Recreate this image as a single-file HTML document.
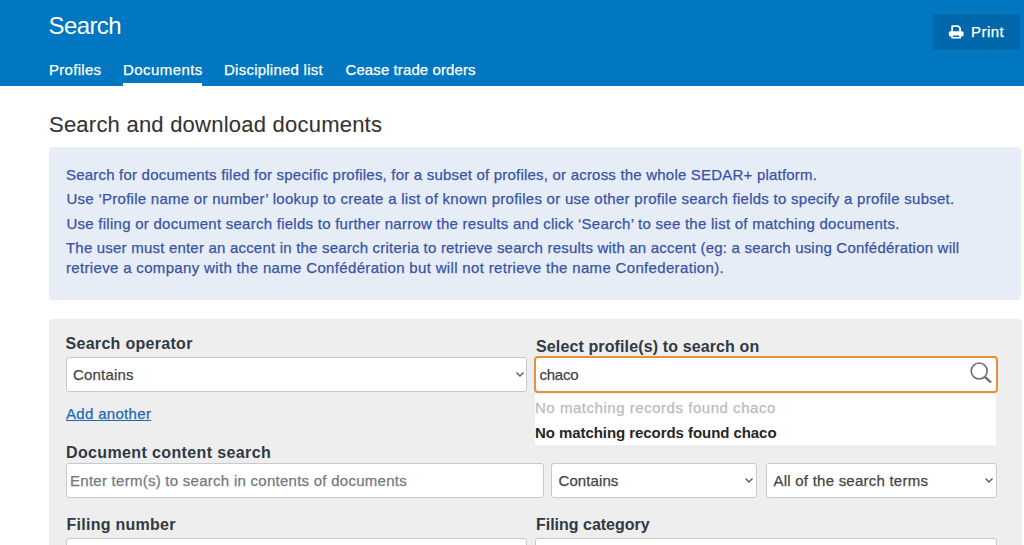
<!DOCTYPE html>
<html>
<head>
<meta charset="utf-8">
<style>
html,body{margin:0;padding:0;}
body{width:1024px;height:545px;overflow:hidden;position:relative;background:#fff;font-family:"Liberation Sans",sans-serif;}
.a{position:absolute;white-space:nowrap;line-height:1;-webkit-text-stroke:0.25px currentColor;}
#hdr{position:absolute;left:0;top:0;width:1024px;height:86px;background:#0077c0;}
#uline{position:absolute;left:123px;top:83px;width:79px;height:3px;background:#fff;}
#print{position:absolute;left:933px;top:14px;width:87px;height:36px;background:#0067ab;border-radius:2px;}
#info{position:absolute;left:49px;top:147px;width:972px;height:153px;background:#e6edf7;border-radius:4px;}
#grey{position:absolute;left:49px;top:319px;width:973px;height:240px;background:#eeeeee;border-radius:4px;}
.box{position:absolute;background:#fff;border:1px solid #c9c9c9;border-radius:3px;box-sizing:border-box;}
.chv{position:absolute;}
</style>
</head>
<body>
<div id="hdr"></div>
<div id="uline"></div>
<div id="print"></div>
<svg style="position:absolute;left:944px;top:20px" width="26" height="24" viewBox="0 0 26 24">
  <path d="M8.2,12 V6.2 H14.2 L16.1,8.1 V12" fill="none" stroke="#fff" stroke-width="1.8" stroke-linejoin="round"/>
  <rect x="4.8" y="11.2" width="14.8" height="5.3" rx="1.6" fill="#fff"/>
  <rect x="7.3" y="14.6" width="9.7" height="3.9" rx="0.6" fill="#fff"/>
  <rect x="9.1" y="15.5" width="6.1" height="1.5" fill="#0067ab"/>
</svg>
<div id="info"></div>
<div id="grey"></div>
<div class="box" style="left:66px;top:357px;width:461px;height:35px"></div>
<svg class="chv" style="left:514.5px;top:370.5px" width="10" height="7" viewBox="0 0 10 7"><polyline points="1.5,1.5 5,5 8.5,1.5" fill="none" stroke="#5a5a5a" stroke-width="1.4"/></svg>
<div class="box" style="left:66px;top:463px;width:478px;height:35px"></div>
<div class="box" style="left:551px;top:463px;width:206px;height:35px"></div>
<svg class="chv" style="left:743.5px;top:476.5px" width="10" height="7" viewBox="0 0 10 7"><polyline points="1.5,1.5 5,5 8.5,1.5" fill="none" stroke="#5a5a5a" stroke-width="1.4"/></svg>
<div class="box" style="left:766px;top:463px;width:231px;height:35px"></div>
<svg class="chv" style="left:983.5px;top:476.5px" width="10" height="7" viewBox="0 0 10 7"><polyline points="1.5,1.5 5,5 8.5,1.5" fill="none" stroke="#5a5a5a" stroke-width="1.4"/></svg>
<div class="box" style="left:66px;top:538px;width:461px;height:35px"></div>
<div style="position:absolute;left:535px;top:394px;width:461px;height:50.5px;background:#fff"></div>
<div class="box" style="left:534px;top:356px;width:464px;height:37px;border:2px solid #e3923a;border-radius:4px"></div>
<svg style="position:absolute;left:968px;top:361px" width="26" height="26" viewBox="0 0 26 26">
  <circle cx="11.2" cy="10" r="8" fill="none" stroke="#6e6e6e" stroke-width="1.6"/>
  <line x1="17" y1="15.8" x2="23" y2="21.5" stroke="#6e6e6e" stroke-width="2.4"/>
</svg>
<div class="box" style="left:535px;top:538px;width:462px;height:35px"></div>
<div class="a" style="left:48.50px;top:14.48px;font-size:24px;font-weight:400;color:#fff;letter-spacing:-0.600px;-webkit-text-stroke:0;">Search</div>
<div class="a" style="left:49.00px;top:62.20px;font-size:15px;font-weight:400;color:#fff;letter-spacing:0.286px;">Profiles</div>
<div class="a" style="left:123.00px;top:62.20px;font-size:15px;font-weight:400;color:#fff;letter-spacing:0.425px;">Documents</div>
<div class="a" style="left:224.00px;top:62.20px;font-size:15px;font-weight:400;color:#fff;letter-spacing:0.240px;">Disciplined list</div>
<div class="a" style="left:345.50px;top:62.20px;font-size:15px;font-weight:400;color:#fff;letter-spacing:0.094px;">Cease trade orders</div>
<div class="a" style="left:971.00px;top:24.30px;font-size:15px;font-weight:400;color:#fff;letter-spacing:0.450px;">Print</div>
<div class="a" style="left:49.00px;top:114.08px;font-size:22px;font-weight:400;color:#333;letter-spacing:0.229px;-webkit-text-stroke:0.1px #333;">Search and download documents</div>
<div class="a" style="left:66.00px;top:166.70px;font-size:15px;font-weight:400;color:#3853a6;letter-spacing:0.204px;">Search for documents filed for specific profiles, for a subset of profiles, or across the whole SEDAR+ platform.</div>
<div class="a" style="left:66.50px;top:191.30px;font-size:15px;font-weight:400;color:#3853a6;letter-spacing:0.268px;">Use ‘Profile name or number’ lookup to create a list of known profiles or use other profile search fields to specify a profile subset.</div>
<div class="a" style="left:66.50px;top:215.50px;font-size:15px;font-weight:400;color:#3853a6;letter-spacing:0.255px;">Use filing or document search fields to further narrow the results and click ‘Search’ to see the list of matching documents.</div>
<div class="a" style="left:66.00px;top:239.70px;font-size:15px;font-weight:400;color:#3853a6;letter-spacing:0.203px;">The user must enter an accent in the search criteria to retrieve search results with an accent (eg: a search using Confédération will</div>
<div class="a" style="left:66.00px;top:260.00px;font-size:15px;font-weight:400;color:#3853a6;letter-spacing:0.333px;">retrieve a company with the name Confédération but will not retrieve the name Confederation).</div>
<div class="a" style="left:65.50px;top:335.86px;font-size:16px;font-weight:700;color:#2f3a44;letter-spacing:0.300px;-webkit-text-stroke:0;">Search operator</div>
<div class="a" style="left:73.00px;top:367.30px;font-size:15px;font-weight:400;color:#444;letter-spacing:0.200px;">Contains</div>
<div class="a" style="left:66.00px;top:406.30px;font-size:15px;font-weight:400;color:#1f68b8;letter-spacing:0.320px;text-decoration:underline;">Add another</div>
<div class="a" style="left:66.00px;top:445.36px;font-size:16px;font-weight:700;color:#2f3a44;letter-spacing:0.373px;-webkit-text-stroke:0;">Document content search</div>
<div class="a" style="left:70.00px;top:473.30px;font-size:15px;font-weight:400;color:#737980;letter-spacing:0.264px;">Enter term(s) to search in contents of documents</div>
<div class="a" style="left:558.50px;top:473.30px;font-size:15px;font-weight:400;color:#444;letter-spacing:0.086px;">Contains</div>
<div class="a" style="left:773.50px;top:473.30px;font-size:15px;font-weight:400;color:#444;letter-spacing:0.236px;">All of the search terms</div>
<div class="a" style="left:66.50px;top:516.96px;font-size:16px;font-weight:700;color:#2f3a44;letter-spacing:0.267px;-webkit-text-stroke:0;">Filing number</div>
<div class="a" style="left:536.00px;top:339.36px;font-size:16px;font-weight:700;color:#2f3a44;letter-spacing:0.124px;-webkit-text-stroke:0;">Select profile(s) to search on</div>
<div class="a" style="left:539.50px;top:367.30px;font-size:15px;font-weight:400;color:#444;letter-spacing:-0.250px;">chaco</div>
<div class="a" style="left:535.00px;top:400.30px;font-size:15px;font-weight:400;color:#bbb;letter-spacing:0.533px;">No matching records found chaco</div>
<div class="a" style="left:535.00px;top:425.30px;font-size:15px;font-weight:700;color:#262626;letter-spacing:-0.060px;-webkit-text-stroke:0;">No matching records found chaco</div>
<div class="a" style="left:536.00px;top:517.16px;font-size:16px;font-weight:700;color:#2f3a44;letter-spacing:-0.014px;-webkit-text-stroke:0;">Filing category</div>
</body></html>
